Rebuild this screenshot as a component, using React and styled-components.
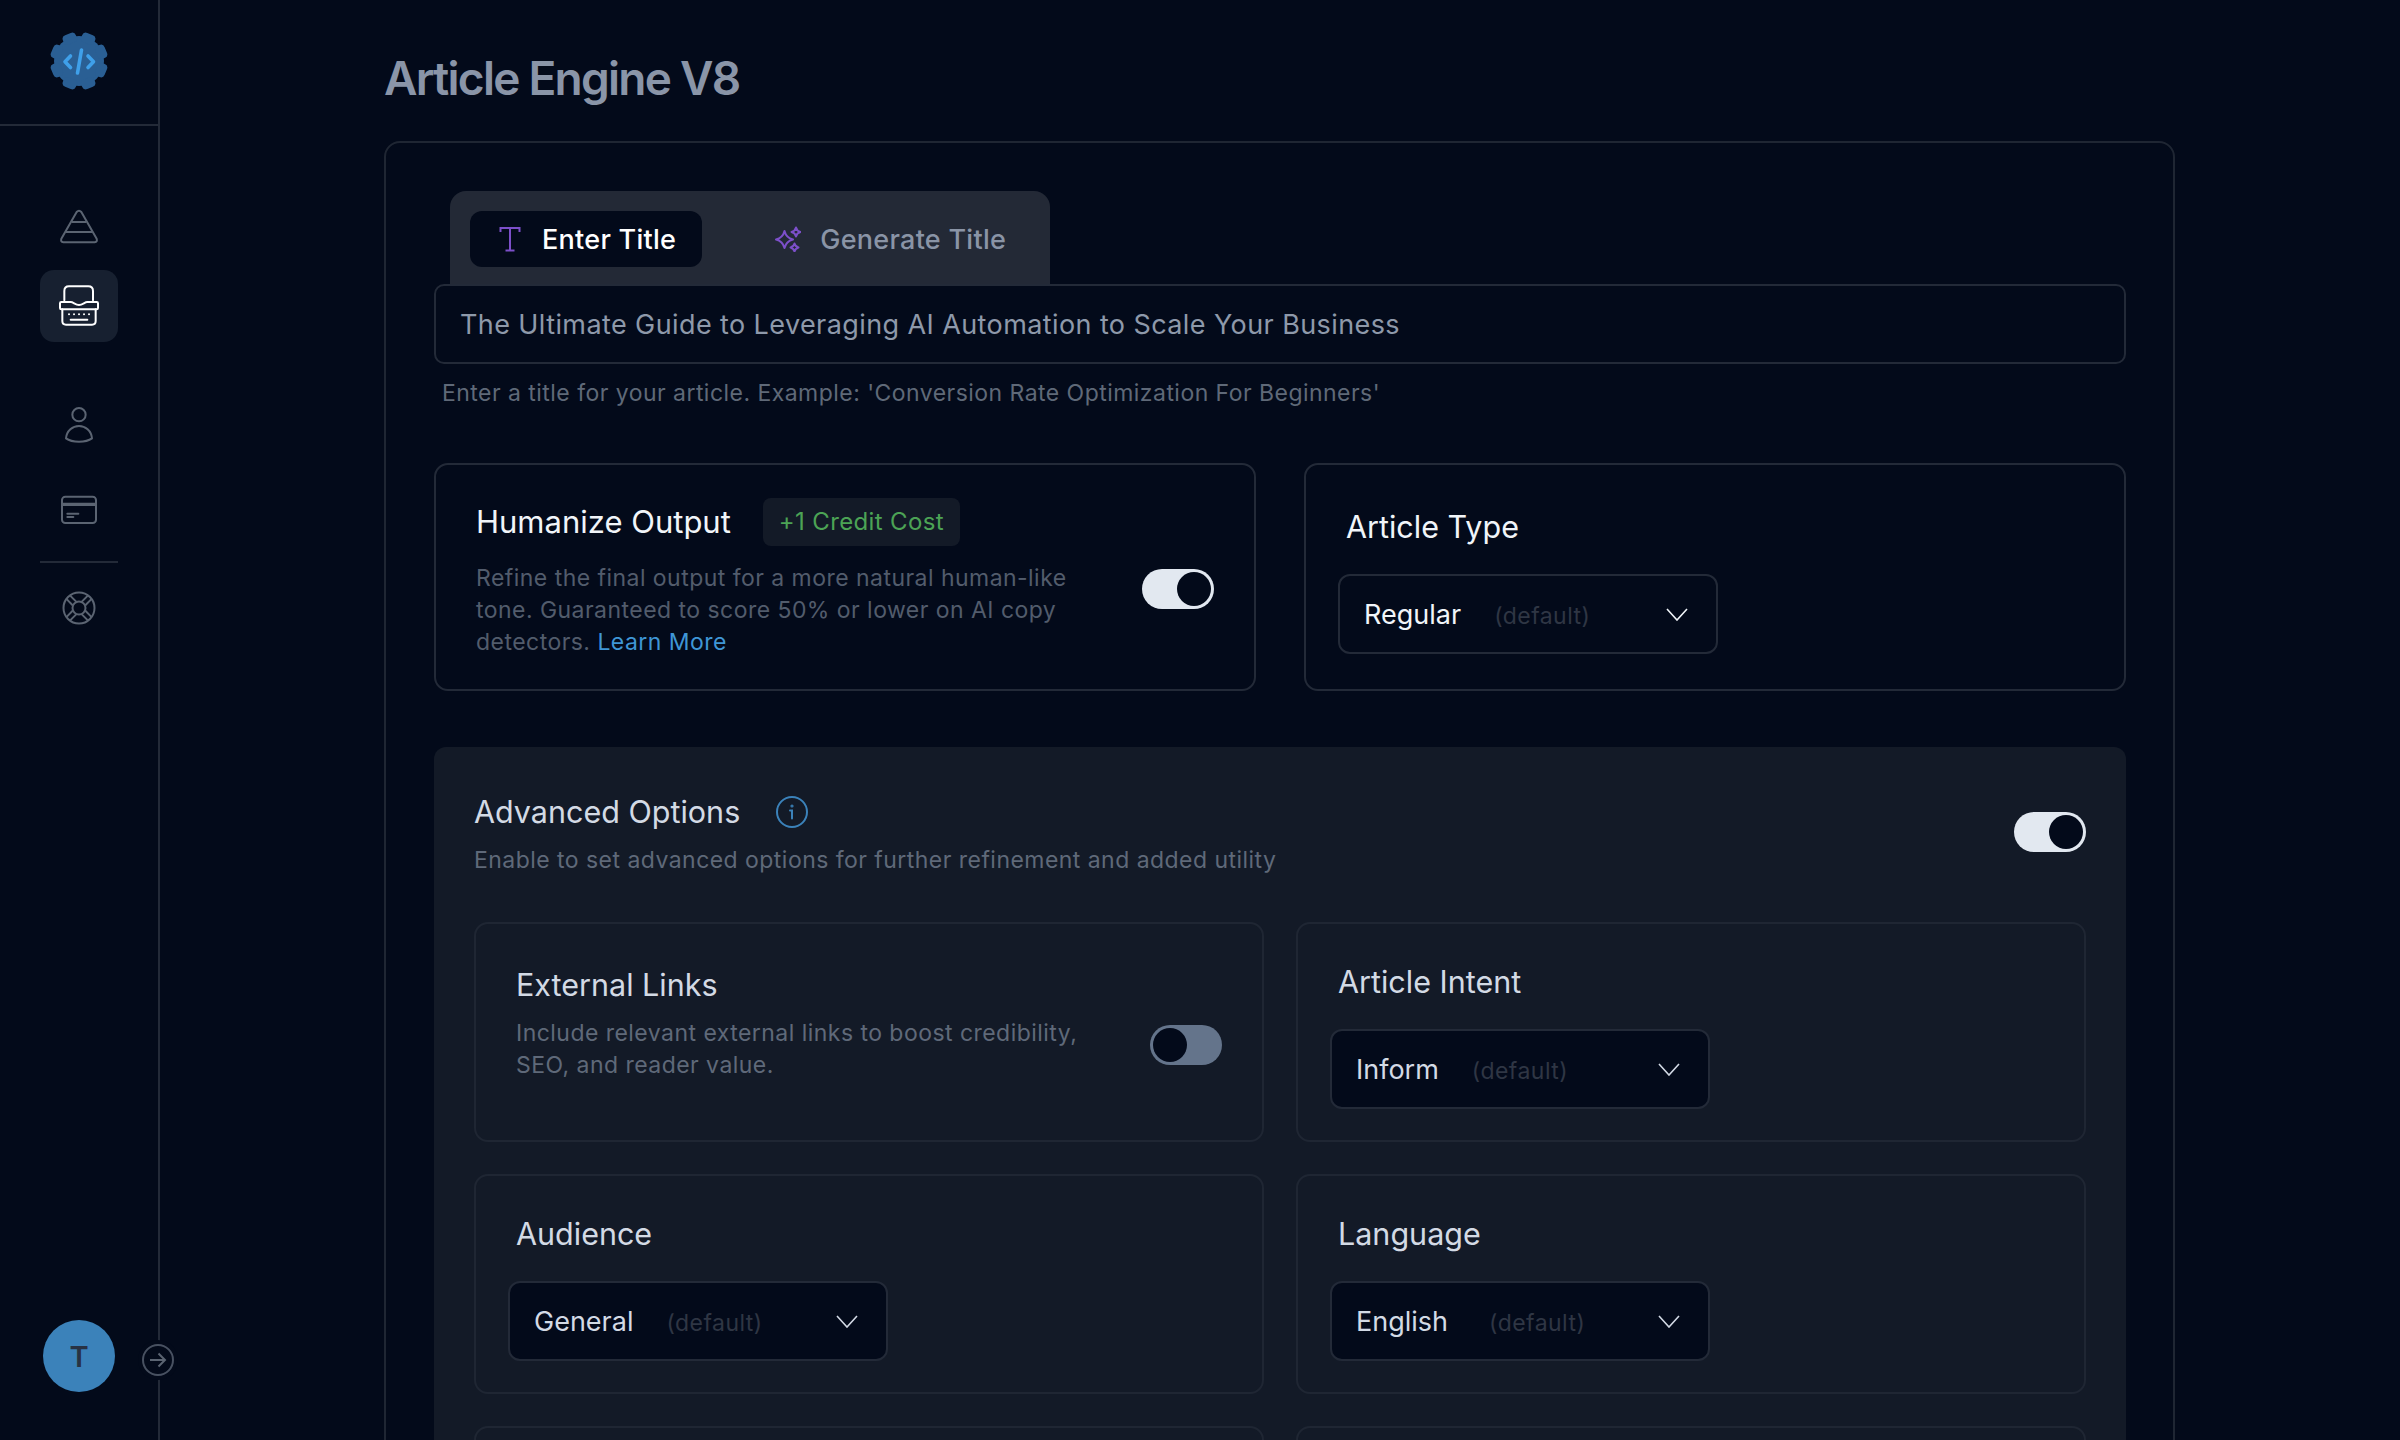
import React from 'react';
import styled, { createGlobalStyle } from 'styled-components';

const GlobalStyle = createGlobalStyle`
  html, body {
    background: #030a1a;
    height: 100%;
    margin: 0;
    overflow: hidden;
  }

  * {
    box-sizing: border-box;
  }

  body {
    color: #f1f5f9;
    font-family: 'Inter', 'Liberation Sans', sans-serif;
  }
`;

const Page = styled.div`
  display: flex;
  height: 1440px;
  overflow: hidden;
`;

const Sidebar = styled.aside`
  border-right: 2px solid #232a38;
  display: flex;
  flex: 0 0 160px;
  flex-direction: column;
  position: relative;
`;

const LogoBar = styled.div`
  align-items: center;
  border-bottom: 2px solid #232a38;
  display: flex;
  height: 126px;
  justify-content: center;
  padding-bottom: 2px;
`;

const Nav = styled.nav`
  align-items: center;
  display: flex;
  flex: 1;
  flex-direction: column;
  padding-top: 64px;
`;

const NavItem = styled.a`
  align-items: center;
  background: ${({ $active }) => ($active ? '#172030' : 'transparent')};
  border-radius: 14px;
  color: ${({ $active }) => ($active ? '#ffffff' : '#5b6472')};
  display: flex;
  height: 72px;
  justify-content: center;
  margin-top: ${({ $gap }) => $gap || 0}px;
  width: 78px;
`;

const NavDivider = styled.div`
  background: #232a38;
  height: 2px;
  margin: 15px 0 9px;
  width: 78px;
`;

const Avatar = styled.div`
  align-items: center;
  background: #3b82ba;
  border-radius: 50%;
  color: #283243;
  display: flex;
  font-size: 29px;
  font-weight: 600;
  height: 72px;
  justify-content: center;
  margin-bottom: 48px;
  margin-top: auto;
  width: 72px;
`;

const CollapseButton = styled.button`
  align-items: center;
  background: #030a1a;
  border: 2px solid #485161;
  border-radius: 50%;
  bottom: 64px;
  box-shadow: 0 0 0 4px #030a1a;
  color: #5b6472;
  display: flex;
  height: 32px;
  justify-content: center;
  left: 142px;
  padding: 0;
  position: absolute;
  width: 32px;
`;

const Main = styled.main`
  flex: 1;
  min-width: 0;
  padding: 50px 225px 0 224px;
`;

const PageTitle = styled.h1`
  color: #8a95a8;
  font-size: 46px;
  font-weight: 600;
  letter-spacing: -0.038em;
  line-height: 56px;
  margin: 0 0 35px;
`;

const EngineCard = styled.section`
  border: 2px solid #1f2633;
  border-radius: 16px;
  padding: 48px 47px 0 48px;
`;

const Tabs = styled.div`
  background: #232936;
  border-radius: 16px 16px 0 0;
  display: flex;
  height: 93px;
  margin-left: 16px;
  padding: 20px;
  width: 600px;
`;

const Tab = styled.button`
  align-items: center;
  background: ${({ $active }) => ($active ? '#030a1a' : 'transparent')};
  border: 0;
  border-radius: 12px;
  color: ${({ $active }) => ($active ? '#ffffff' : '#8a94a6')};
  display: flex;
  font-family: inherit;
  font-size: 27px;
  font-weight: 500;
  gap: ${({ $active }) => ($active ? 21 : 19)}px;
  height: 56px;
  letter-spacing: 0.01em;
  margin-left: ${({ $active }) => ($active ? 0 : 73)}px;
  padding: ${({ $active }) => ($active ? '0 26px 0 29px' : '0')};
  white-space: nowrap;
`;

const TitleInput = styled.div`
  align-items: center;
  border: 2px solid #232a38;
  border-radius: 10px;
  color: #8e99aa;
  display: flex;
  font-size: 27px;
  height: 80px;
  letter-spacing: 0.015em;
  padding-left: 24px;
`;

const HelpText = styled.p`
  color: #5f6978;
  font-size: 23px;
  letter-spacing: 0.02em;
  line-height: 32px;
  margin: 13px 0 0 8px;
`;

const TwoCols = styled.div`
  display: grid;
  gap: ${({ $rowGap }) => $rowGap}px ${({ $colGap }) => $colGap}px;
  grid-auto-rows: ${({ $row }) => $row}px;
  grid-template-columns: 1fr 1fr;
  margin-top: ${({ $top }) => $top || 0}px;
`;

const OptionCard = styled.div`
  border: 2px solid ${({ $nested }) => ($nested ? '#1f2633' : '#232a38')};
  border-radius: 14px;
  padding: ${({ $top }) => $top}px 32px 0;
`;

const ToggleCard = styled(OptionCard)`
  padding: ${({ $top }) => $top}px 40px 0;
`;

const CardHead = styled.div`
  align-items: center;
  display: flex;
  gap: 32px;
`;

const CardLabel = styled.h3`
  color: ${({ $nested }) => ($nested ? '#d3dae5' : '#f1f5f9')};
  font-size: ${({ $size }) => $size || 30.5}px;
  font-weight: 400;
  line-height: 48px;
  margin: 0 0 ${({ $below }) => $below || 0}px;
  padding-left: ${({ $inset }) => $inset || 0}px;
`;

const CreditBadge = styled.span`
  background: #131a27;
  border-radius: 8px;
  color: #4ca355;
  font-size: 24px;
  letter-spacing: 0.015em;
  line-height: 48px;
  padding: 0 16px;
`;

const ToggleRow = styled.div`
  align-items: flex-start;
  display: flex;
  justify-content: space-between;
`;

const Description = styled.p`
  color: ${({ $nested }) => ($nested ? '#5f6979' : '#525c6c')};
  font-size: 23px;
  letter-spacing: 0.02em;
  line-height: 32px;
  margin: ${({ $top }) => $top}px 0 0;
  width: ${({ $width }) => $width}px;
`;

const LearnMore = styled.a`
  color: #3f96d6;
`;

const Switch = styled.div`
  align-items: center;
  background: ${({ $on }) => ($on ? '#e2e8f0' : '#64748b')};
  border-radius: 20px;
  display: flex;
  flex: 0 0 72px;
  height: 40px;
  justify-content: ${({ $on }) => ($on ? 'flex-end' : 'flex-start')};
  margin-top: ${({ $top }) => $top || 0}px;
  padding: 3px;

  &::after {
    background: #030a1a;
    border-radius: 50%;
    content: '';
    height: 34px;
    width: 34px;
  }
`;

const SelectBox = styled.div`
  align-items: center;
  background: #030a1a;
  border: 2px solid #232a38;
  border-radius: 12px;
  color: ${({ $nested }) => ($nested ? '#d3dae5' : '#f1f5f9')};
  display: flex;
  font-size: 27px;
  height: 80px;
  justify-content: space-between;
  padding: 0 28px 0 24px;
  width: 380px;

  svg {
    flex: none;
  }
`;

const SelectValue = styled.span`
  align-items: baseline;
  display: flex;
  gap: ${({ $hintGap }) => $hintGap}px;
`;

const DefaultHint = styled.span`
  color: #2f3644;
  font-size: 23px;
  letter-spacing: 0.02em;
`;

const AdvancedPanel = styled.div`
  background: #131a27;
  border-radius: 12px;
  margin-top: 56px;
  padding: 41px 40px 0;
`;

const AdvancedHead = styled.div`
  align-items: center;
  display: flex;
  justify-content: space-between;
`;

const AdvancedTitle = styled.div`
  align-items: center;
  color: #d3dae5;
  display: flex;
  font-size: 30.5px;
  gap: 36px;
  line-height: 48px;
`;

const AdvancedSub = styled.p`
  color: #5f6979;
  font-size: 23px;
  letter-spacing: 0.02em;
  line-height: 32px;
  margin: 8px 0 0;
`;

const GearLogo = () => (
  <svg width="58" height="58" viewBox="0 0 58 58">
    <circle cx="29" cy="29" r="25" fill="#2a5f94" />
    {[0, 45, 90, 135, 180, 225, 270, 315].map((deg) => (
      <rect key={deg} x="22" y="0" width="14" height="10" rx="4" fill="#2a5f94" transform={`rotate(${deg + 22.5} 29 29)`} />
    ))}
    <g fill="none" stroke="#3fa0ea" strokeWidth="3.6" strokeLinecap="round" strokeLinejoin="round">
      <path d="M20.5 24 L15 29.8 L20.5 35.5" />
      <path d="M31.5 18 L27.5 41" />
      <path d="M38 24 L43.5 29.8 L38 35.5" />
    </g>
  </svg>
);

const PyramidIcon = () => (
  <svg width="40" height="35" viewBox="117 87 120 105" fill="none" stroke="currentColor" strokeWidth="6" strokeLinejoin="round">
    <path d="M170 96 Q177 88 184 96 L230 176 Q233 186 224 187 H130 Q121 186 124 176 Z" />
    <path d="M155 126 H199 M138 156 H216" />
  </svg>
);

const TypewriterIcon = () => (
  <svg width="40" height="42" viewBox="117 317 120 124" fill="none" stroke="currentColor" strokeWidth="6" strokeLinecap="round" strokeLinejoin="round">
    <path d="M133 362 V334 Q133 320 147 320 H205 Q219 320 219 334 V362" />
    <path d="M124 367 H152 C160 367 166 376 177 376 C188 376 194 367 202 367 H230 Q234 367 234 371 V385 Q234 389 230 389 H124 Q120 389 120 385 V371 Q120 367 124 367 Z" />
    <path d="M127 389 V424 Q127 435 138 435 H216 Q227 435 227 424 V389" />
    <path d="M147 404 H147.1 M162 404 H162.1 M177 404 H177.1 M192 404 H192.1 M207 404 H207.1" />
    <path d="M152 420 H202" />
  </svg>
);

const PersonIcon = () => (
  <svg width="30" height="38" viewBox="132 82 90 112" fill="none" stroke="currentColor" strokeWidth="6" strokeLinejoin="round">
    <circle cx="177" cy="107" r="20" />
    <path d="M138 178 C140 155 158 141 177 141 C196 141 214 155 216 178 C205 186 190 188 177 188 C164 188 149 186 138 178 Z" />
  </svg>
);

const BillingIcon = () => (
  <svg width="38" height="30" viewBox="120 346 114 90" fill="none" stroke="currentColor" strokeWidth="6" strokeLinecap="round">
    <rect x="126" y="351" width="102" height="79" rx="10" />
    <path d="M126 374 H228" strokeWidth="10" strokeLinecap="butt" />
    <path d="M142 402 H175 M142 412 H160" />
  </svg>
);

const LifebuoyIcon = () => (
  <svg width="34" height="34" viewBox="0 0 34 34" fill="none" stroke="currentColor" strokeWidth="2">
    <circle cx="17" cy="17" r="15.5" />
    <circle cx="17" cy="17" r="6.5" />
    {[45, 135, 225, 315].map((deg) => (
      <path key={deg} d="M14.5 10.5 L14.5 2 M19.5 10.5 L19.5 2" transform={`rotate(${deg} 17 17)`} />
    ))}
  </svg>
);

const SerifT = () => (
  <svg width="22" height="26" viewBox="0 0 22 26" fill="none" stroke="#7c4fc9" strokeWidth="2">
    <path d="M1.5 6 V2 H20.5 V6 M11 2 V24.5 M6.5 24.5 H15.5" />
  </svg>
);

const Star = ({ cx, cy, r }) => (
  <path d={`M${cx} ${cy - r} Q${cx + r * 0.2} ${cy - r * 0.2} ${cx + r} ${cy} Q${cx + r * 0.2} ${cy + r * 0.2} ${cx} ${cy + r} Q${cx - r * 0.2} ${cy + r * 0.2} ${cx - r} ${cy} Q${cx - r * 0.2} ${cy - r * 0.2} ${cx} ${cy - r} Z`} />
);

const SparkIcon = () => (
  <svg width="26" height="26" viewBox="0 0 26 26" fill="none" stroke="#7c4fc9" strokeWidth="2" strokeLinejoin="round">
    <Star cx={9.5} cy={13.5} r={8.5} />
    <Star cx={21} cy={6} r={4.5} />
    <Star cx={19.5} cy={21.5} r={4} />
  </svg>
);

const InfoIcon = () => (
  <svg width="32" height="32" viewBox="0 0 32 32" fill="none" stroke="#3b82ba" strokeWidth="2" strokeLinecap="round">
    <circle cx="16" cy="16" r="15" />
    <path d="M14 14.5 H16 V22.5" />
    <circle cx="16" cy="10" r="0.6" />
  </svg>
);

const Chevron = () => (
  <svg width="22" height="13" viewBox="0 0 22 13" fill="none" stroke="currentColor" strokeWidth="1.6">
    <path d="M1 1 L11 12 L21 1" />
  </svg>
);

const ArrowIcon = () => (
  <svg width="18" height="16" viewBox="0 0 18 16" fill="none" stroke="currentColor" strokeWidth="2">
    <path d="M1 8 H16 M9.5 1.5 L16 8 L9.5 14.5" />
  </svg>
);

const Select = ({ value, nested, hintGap = 33 }) => (
  <SelectBox $nested={nested}>
    <SelectValue $hintGap={hintGap}>
      {value}
      <DefaultHint>(default)</DefaultHint>
    </SelectValue>
    <Chevron />
  </SelectBox>
);

const SelectCard = ({ label, value, hintGap }) => (
  <OptionCard $nested $top={34}>
    <CardLabel $nested $inset={8} $below={23}>{label}</CardLabel>
    <Select nested value={value} hintGap={hintGap} />
  </OptionCard>
);

function App() {
  return (
    <Page>
      <GlobalStyle />
      <Sidebar>
        <LogoBar>
          <GearLogo />
        </LogoBar>
        <Nav>
          <NavItem><PyramidIcon /></NavItem>
          <NavItem $active $gap={8}><TypewriterIcon /></NavItem>
          <NavItem $gap={47}><PersonIcon /></NavItem>
          <NavItem $gap={13}><BillingIcon /></NavItem>
          <NavDivider />
          <NavItem><LifebuoyIcon /></NavItem>
          <Avatar>T</Avatar>
        </Nav>
        <CollapseButton><ArrowIcon /></CollapseButton>
      </Sidebar>
      <Main>
        <PageTitle>Article Engine V8</PageTitle>
        <EngineCard>
          <Tabs>
            <Tab $active>
              <SerifT />
              Enter Title
            </Tab>
            <Tab>
              <SparkIcon />
              Generate Title
            </Tab>
          </Tabs>
          <TitleInput>The Ultimate Guide to Leveraging AI Automation to Scale Your Business</TitleInput>
          <HelpText>Enter a title for your article. Example: 'Conversion Rate Optimization For Beginners'</HelpText>

          <TwoCols $colGap={48} $rowGap={48} $row={228} $top={54}>
            <ToggleCard $top={33}>
              <CardHead>
                <CardLabel $size={31}>Humanize Output</CardLabel>
                <CreditBadge>+1 Credit Cost</CreditBadge>
              </CardHead>
              <ToggleRow>
                <Description $width={630} $top={16}>
                  Refine the final output for a more natural human-like tone. Guaranteed to score 50% or lower on AI copy detectors.
                  {' '}
                  <LearnMore>Learn More</LearnMore>
                </Description>
                <Switch $on $top={23} />
              </ToggleRow>
            </ToggleCard>
            <OptionCard $top={38}>
              <CardLabel $inset={8} $below={23}>Article Type</CardLabel>
              <Select value="Regular" />
            </OptionCard>
          </TwoCols>

          <AdvancedPanel>
            <AdvancedHead>
              <div>
                <AdvancedTitle>
                  Advanced Options
                  <InfoIcon />
                </AdvancedTitle>
                <AdvancedSub>Enable to set advanced options for further refinement and added utility</AdvancedSub>
              </div>
              <Switch $on />
            </AdvancedHead>
            <TwoCols $colGap={32} $rowGap={32} $row={220} $top={46}>
              <ToggleCard $nested $top={37}>
                <CardLabel $nested>External Links</CardLabel>
                <ToggleRow>
                  <Description $nested $width={590} $top={8}>
                    Include relevant external links to boost credibility, SEO, and reader value.
                  </Description>
                  <Switch $top={16} />
                </ToggleRow>
              </ToggleCard>
              <SelectCard label="Article Intent" value="Inform" />
              <SelectCard label="Audience" value="General" />
              <SelectCard label="Language" value="English" hintGap={41} />
              <OptionCard $nested $top={31} />
              <OptionCard $nested $top={31} />
            </TwoCols>
          </AdvancedPanel>
        </EngineCard>
      </Main>
    </Page>
  );
}

export default App;
